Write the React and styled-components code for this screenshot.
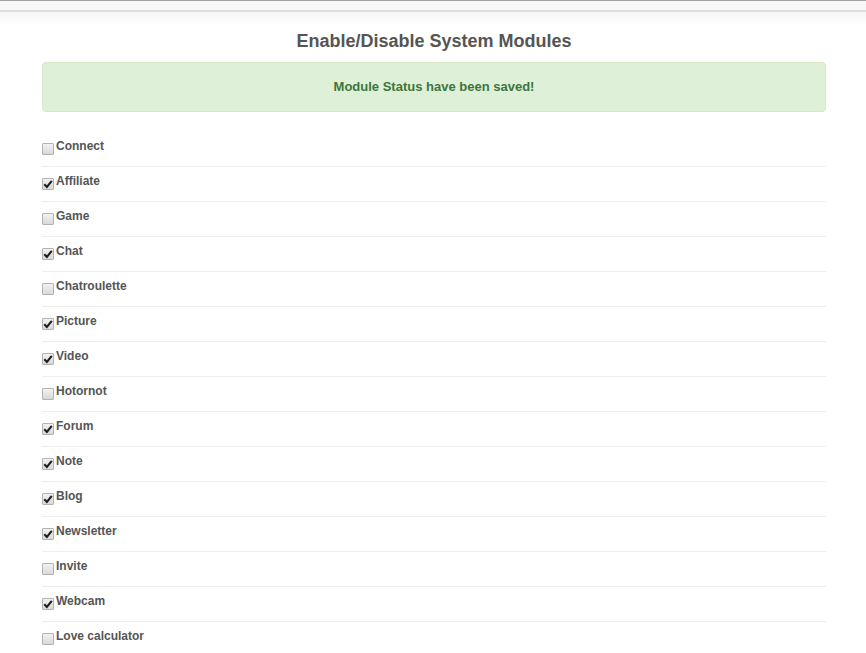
import styled, { createGlobalStyle } from "styled-components";

const GlobalStyle = createGlobalStyle`
  body {
    margin: 0;
    background: #fff;
    font-family: "Liberation Sans", Arial, sans-serif;
  }
`;

const modules = [
  { name: "Connect", on: false },
  { name: "Affiliate", on: true },
  { name: "Game", on: false },
  { name: "Chat", on: true },
  { name: "Chatroulette", on: false },
  { name: "Picture", on: true },
  { name: "Video", on: true },
  { name: "Hotornot", on: false },
  { name: "Forum", on: true },
  { name: "Note", on: true },
  { name: "Blog", on: true },
  { name: "Newsletter", on: true },
  { name: "Invite", on: false },
  { name: "Webcam", on: true },
  { name: "Love calculator", on: false },
];

export default function App() {
  return (
    <>
      <GlobalStyle />
      <TopBar />
      <Fade />
      <Page>
        <Title>Enable/Disable System Modules</Title>
        <Alert>Module Status have been saved!</Alert>
        <List>
          {modules.map((m, i) => (
            <Row key={m.name} $last={i === modules.length - 1}>
              <Box $on={m.on}>
                {m.on && (
                  <svg width="10" height="10" viewBox="0 0 10 10">
                    <path d="M1.3 5.2 L3.9 7.9 L8.8 1.8" fill="none" stroke="#1e1e1e" strokeWidth="2.1" />
                  </svg>
                )}
              </Box>
              <Label>{m.name}</Label>
            </Row>
          ))}
        </List>
      </Page>
    </>
  );
}

const TopBar = styled.div`
  height: 9px;
  background: #f8f8f8;
  border-top: 1px solid #a3a3a3;
  border-bottom: 2px solid #dedede;
`;

const Fade = styled.div`
  height: 14px;
  background: linear-gradient(#f6f6f6, #fff);
`;

const Page = styled.div`
  padding: 0 40px 0 42px;
`;

const Title = styled.h2`
  margin: 5px 0 0;
  text-align: center;
  font-size: 18px;
  line-height: 20px;
  font-weight: bold;
  color: #555;
`;

const Alert = styled.div`
  margin-top: 11px;
  height: 48px;
  box-sizing: content-box;
  border: 1px solid #d6e9c6;
  border-radius: 4px;
  background: #dff0d8;
  color: #3c763d;
  font-size: 13px;
  font-weight: bold;
  display: flex;
  align-items: center;
  justify-content: center;
  line-height: 46px;
`;

const List = styled.div`
  margin-top: 20px;
`;

const Row = styled.div`
  display: flex;
  align-items: flex-start;
  box-sizing: content-box;
  padding-top: 11px;
  height: 23px;
  border-bottom: ${(p) => (p.$last ? "none" : "1px solid #eee")};
`;

const Box = styled.span`
  width: 10px;
  height: 10px;
  border: 1px solid #b3b3b3;
  border-radius: 1px;
  background: linear-gradient(#f2f2f2, #d8d8d8);
  display: flex;
  align-items: center;
  justify-content: center;
  flex-shrink: 0;
`;

const Label = styled.span`
  font-size: 12px;
  line-height: 12px;
  font-weight: bold;
  color: #555;
  margin-top: -3px;
  margin-left: 2px;
`;
